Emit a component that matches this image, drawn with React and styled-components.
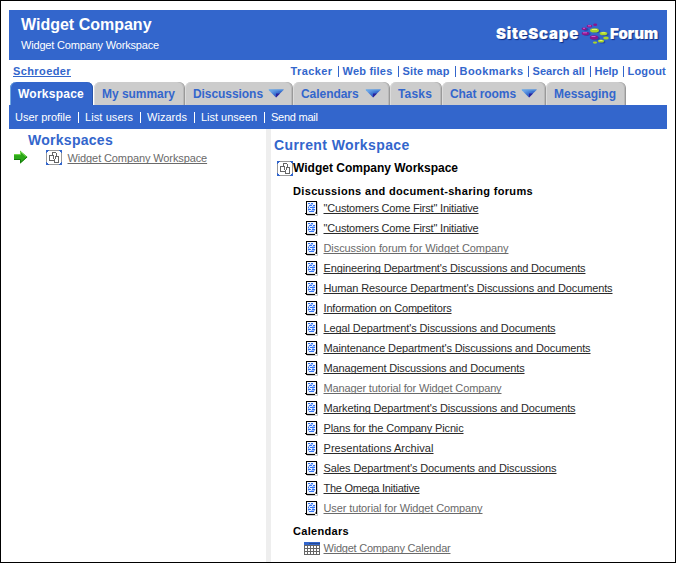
import React from 'react';
import styled, { createGlobalStyle } from 'styled-components';

const BLUE = '#3366cc';

const GlobalStyle = createGlobalStyle`
  *, *::before, *::after { box-sizing: border-box; }
  body { margin: 0; background: #fff; font: 11px "Liberation Sans", Arial, sans-serif; }
  svg { display: block; flex: none; }
`;

const Page = styled.div`
  width: 676px;
  height: 563px;
  border: 1px solid #000;
  padding: 9px 8px 0;
  background: #fff;
  overflow: hidden;
  display: flex;
  flex-direction: column;
  white-space: nowrap;
`;

const Header = styled.header`
  flex: none;
  height: 50px;
  background: ${BLUE};
  color: #fff;
  display: flex;
  justify-content: space-between;
  padding: 0 8px 0 12px;
`;

const Title = styled.h1`
  margin: 0;
  padding-top: 5px;
  font-size: 16px;
  line-height: 20px;
`;

const Subtitle = styled.div`
  margin-top: 3px;
  line-height: 14px;
  letter-spacing: -0.177px;
`;

const Brand = styled.div`
  height: 50px;
  display: flex;
  align-items: center;
  font: 900 15px/48px Inter, "Liberation Sans", sans-serif;
  text-shadow: 1px 1px 1px #0b2a80;
  -webkit-text-stroke: 0.15px #fff;
  padding-bottom: 2px;
`;

const BrandWord = styled.span`
  width: ${(p) => p.$w}px;
  padding-left: ${(p) => p.$pad || 0}px;
  letter-spacing: ${(p) => p.$ls}px;
`;

const UserBar = styled.div`
  flex: none;
  height: 22px;
  padding: 0 0 0 4px;
  display: flex;
  justify-content: space-between;
  font-weight: bold;
  line-height: 22px;
  color: ${BLUE};
`;

const UserLink = styled.a`
  letter-spacing: 0.398px;
  text-decoration: underline;
  text-underline-offset: 1px;
  text-decoration-thickness: 1px;
`;

const Tools = styled.nav`
  display: flex;
`;

const Tool = styled.a`
  width: ${(p) => p.$w}px;
  letter-spacing: ${(p) => p.$ls}px;
  display: flex;
  justify-content: space-between;
  &:not(:last-child)::after {
    content: '';
    width: 1px;
    height: 11px;
    margin: 6px 4px 0 0;
    background: ${BLUE};
  }
`;

const Tabs = styled.nav`
  flex: none;
  height: 23px;
  padding-left: 1px;
  display: flex;
  gap: 1px;
`;

const Tab = styled.a`
  width: ${(p) => p.$w}px;
  height: 23px;
  padding: 0 8px;
  display: flex;
  justify-content: space-between;
  align-items: center;
  border-radius: 6px 6px 0 0;
  font-size: 12px;
  font-weight: bold;
  line-height: 24px;
  letter-spacing: ${(p) => p.$ls}px;
  color: ${(p) => (p.$active ? '#fff' : BLUE)};
  background: ${(p) => (p.$active ? BLUE : '#ccc')};
  box-shadow: ${(p) =>
    p.$active
      ? 'inset 1px 0 0 #70a7e0, inset -1px 0 0 #2754aa'
      : 'inset 1px 0 0 #dcdcdc, inset -1px 0 0 #b8b8b8, 1px 0 0 #999'};
`;

const SubNav = styled.nav`
  flex: none;
  height: 24px;
  background: ${BLUE};
  color: #fff;
  display: flex;
  padding-left: 6px;
  line-height: 25px;
`;

const SubItem = styled.a`
  width: ${(p) => p.$w}px;
  letter-spacing: ${(p) => p.$ls}px;
  display: flex;
  justify-content: space-between;
  &:not(:last-child)::after {
    content: '';
    width: 1px;
    height: 11px;
    margin: 7px 6px 0 0;
    background: #fff;
  }
`;

const Body = styled.main`
  flex: 1;
  display: flex;
`;

const SidePane = styled.section`
  width: 257px;
  padding-top: 2px;
`;

const Divider = styled.div`
  width: 5px;
  background: #eee;
`;

const MainPane = styled.section`
  padding: 7px 0 0 3px;
`;

const PaneTitle = styled.h2`
  margin: 0 0 0 ${(p) => p.$indent || 0}px;
  font-size: 14px;
  line-height: 18px;
  color: ${BLUE};
  letter-spacing: ${(p) => p.$ls}px;
`;

const TreeRow = styled.div`
  height: 17px;
  padding-left: 5px;
  display: flex;
  align-items: center;
  & > svg:first-child { margin-right: 18px; }
  & > a { margin-left: 5.5px; }
`;

const CurrentRow = styled.div`
  height: 18px;
  margin-top: 5px;
  padding-left: 3px;
  display: flex;
  align-items: flex-start;
  font-size: 12px;
  font-weight: bold;
  line-height: 18px;
  & > svg { margin-top: 2px; }
`;

const GroupTitle = styled.h3`
  margin: ${(p) => p.$top}px 0 0 19px;
  font-size: 11px;
  line-height: 14px;
  letter-spacing: ${(p) => p.$ls}px;
`;

const EntryRow = styled.div`
  height: 20px;
  padding-left: ${(p) => p.$indent}px;
  display: flex;
  align-items: center;
  gap: ${(p) => p.$gap}px;
`;

const EntryLink = styled.a`
  line-height: 20px;
  color: ${(p) => (p.$visited ? '#6a6a6a' : '#2a2a2a')};
  letter-spacing: ${(p) => p.$ls}px;
  text-decoration: underline;
  text-decoration-thickness: 1px;
  text-underline-offset: 1px;
  text-decoration-skip-ink: none;
`;

const Orbs = () => (
  <svg width="29" height="22" viewBox="0 0 29 22">
    <g fill="#0f3090" opacity=".5">
      <ellipse cx="6" cy="6.5" rx="2.6" ry="1.4" /><ellipse cx="16" cy="8.1" rx="4.4" ry="2" />
      <ellipse cx="7" cy="11.1" rx="3.6" ry="1.8" /><ellipse cx="25" cy="11.2" rx="3.6" ry="1.8" />
      <ellipse cx="15.6" cy="15.2" rx="4.2" ry="2" /><ellipse cx="22.4" cy="19" rx="3" ry="1.6" />
    </g>
    <g fill="#8a168c">
      <ellipse cx="4.2" cy="5.8" rx="2.7" ry="1.4" /><ellipse cx="9.5" cy="3.2" rx="2.8" ry="1.4" />
      <ellipse cx="15.2" cy="1.7" rx="2" ry="1.3" /><ellipse cx="5.5" cy="10.6" rx="3.8" ry="1.8" />
      <ellipse cx="14" cy="14.4" rx="4.2" ry="2.2" />
    </g>
    <g fill="#a9d42a">
      <ellipse cx="14.5" cy="7.4" rx="4.4" ry="2.1" /><ellipse cx="23.5" cy="10.5" rx="3.9" ry="1.8" />
      <ellipse cx="26" cy="15" rx="2.8" ry="1.5" /><ellipse cx="21" cy="18" rx="3" ry="1.5" />
      <ellipse cx="15" cy="19.6" rx="2.2" ry="1.1" />
    </g>
    <g fill="#d35bd0">
      <rect x="3" y="4.8" width="2" height="1" /><rect x="8" y="2.3" width="3" height="1" />
      <rect x="3" y="9.3" width="4" height="1" /><rect x="11.5" y="13" width="4" height="1" />
    </g>
    <g fill="#e3f76c">
      <rect x="12" y="6" width="5" height="1" /><rect x="21.5" y="9.3" width="4" height="1" />
      <rect x="19.5" y="17" width="3" height="1" />
    </g>
  </svg>
);

const Chevron = () => (
  <svg width="16" height="9" viewBox="0 0 16 9">
    <defs>
      <linearGradient id="chev" x1="0" y1="0" x2="1" y2="1">
        <stop offset="0" stopColor="#8fc5f5" />
        <stop offset=".5" stopColor="#3a73d2" />
        <stop offset="1" stopColor="#2d1c94" />
      </linearGradient>
    </defs>
    <path d="M0 .5H16L8 8.5Z" fill="url(#chev)" />
    <path d="M8 4.5 12 4.5 8 8.5Z" fill="#2b229b" />
    <path d="M1 1H15" stroke="#5d9ce0" />
  </svg>
);

const Arrow = () => (
  <svg width="14" height="15" viewBox="0 0 14 15">
    <path d="M0 4H6V.5L13.5 7 6 13.8V10H0Z" fill="#2ca818" />
    <path d="M0 4.6H6.5V1.7L12 6.5" fill="none" stroke="#74d84e" />
    <path d="M0 9.5H6.5V12.7L13 7" fill="none" stroke="#157a0c" />
  </svg>
);

const WorkspaceIcon = () => (
  <svg width="16" height="15" viewBox="0 0 16 15" shapeRendering="crispEdges">
    <path d="M0 0H16V15H0Z" fill="#999" />
    <path d="M1 1H15V14H1Z" fill="#fff" />
    <path d="M0 0H3V1H2V2H1V3H0ZM16 0H13V1H14V2H15V3H16ZM0 15H3V14H2V13H1V12H0ZM16 15H13V14H14V13H15V12H16Z" fill={BLUE} />
    <path fill="#666" fillRule="evenodd" d="M6 2H10V3H11V6H13V13H8V11H3V5H6ZM7 3V5H8V9H9V6H10V3ZM4 6V10H8V9H7V6ZM9 9V12H12V7H10V9Z" />
  </svg>
);

const DocIcon = () => (
  <svg width="13" height="16" viewBox="0 0 13 16" shapeRendering="crispEdges">
    <path d="M12 2H13V16H2V15H12Z" fill="#ccc" />
    <path d="M2 2H11V13H2Z" fill="#f2f6ff" />
    <path d="M1 1H12V14H11V2H2V13H1Z" fill="#000" />
    <path d="M0 13H2V14H10V15H1V14H0Z" fill="#000" />
    <path d="M2 13H10V14H2Z" fill="#ddd" />
    <path d="M10 12H11V14H10Z" fill="#888" />
    <path
      fill="#2f74f5"
      d="M3 3H5V4H3ZM6 3H8V4H6ZM4 5H7V6H4ZM8 5H10V6H8ZM3 7H4V8H3ZM5 7H10V8H5ZM3 9H6V10H3ZM7 9H10V10H7ZM4 11H9V12H4Z"
    />
    <path fill="#a4c2fc" d="M3 6H5V7H3ZM7 6H10V7H7ZM3 8H5V9H3ZM7 8H9V9H7ZM3 10H4V11H3ZM6 10H10V11H6ZM5 4H8V5H5Z" />
  </svg>
);

const CalendarIcon = () => (
  <svg width="16" height="13" viewBox="0 0 16 13" shapeRendering="crispEdges">
    <rect width="16" height="13" fill="#666" />
    <rect width="16" height="3" fill={BLUE} />
    <rect width="11" height="1" x="5" y="1" fill="#234a96" />
    <g fill="#fff">
      {[4, 7, 10].map((y) => [1, 4, 7, 10, 13].map((x) => <rect key={`${x}-${y}`} x={x} y={y} width="2" height="2" />))}
    </g>
  </svg>
);

const tools = [
  ['Tracker', 52, 0.406], ['Web files', 60, 0.212], ['Site map', 57, 0.143], ['Bookmarks', 73, 0.453],
  ['Search all', 62, 0.05], ['Help', 33, 0], ['Logout', 39.5, 0.2],
];

const tabs = [
  ['Workspace', 83, 0.243, false], ['My summary', 90, -0.037, false], ['Discussions', 107, -0.064, true],
  ['Calendars', 96, -0.05, true], ['Tasks', 51, 0.172, false], ['Chat rooms', 103, -0.069, true],
  ['Messaging', 79, 0, false],
];

const subItems = [
  ['User profile', 70, -0.021], ['List users', 62, 0.092], ['Wizards', 54, 0.038],
  ['List unseen', 70, -0.024], ['Send mail', 50, -0.25],
];

const forums = [
  ['"Customers Come First" Initiative', -0.189],
  ['"Customers Come First" Initiative', -0.189],
  ['Discussion forum for Widget Company', -0.077, true],
  ["Engineering Department's Discussions and Documents", -0.134],
  ["Human Resource Department's Discussions and Documents", -0.124],
  ['Information on Competitors', -0.18],
  ["Legal Department's Discussions and Documents", -0.111],
  ["Maintenance Department's Discussions and Documents", -0.119],
  ['Management Discussions and Documents', -0.14],
  ['Manager tutorial for Widget Company', -0.138, true],
  ["Marketing Department's Discussions and Documents", -0.131],
  ['Plans for the Company Picnic', -0.153],
  ['Presentations Archival', 0.053],
  ["Sales Department's Documents and Discussions", -0.102],
  ['The Omega Initiative', -0.275],
  ['User tutorial for Widget Company', -0.113, true],
];

export default function App() {
  return (
    <>
      <GlobalStyle />
      <Page>
        <Header>
          <div>
            <Title>Widget Company</Title>
            <Subtitle>Widget Company Workspace</Subtitle>
          </div>
          <Brand>
            <BrandWord $w={84} $ls={0.75}>SiteScape</BrandWord>
            <Orbs />
            <BrandWord $w={50} $pad={1} $ls={0}>Forum</BrandWord>
          </Brand>
        </Header>
        <UserBar>
          <UserLink>Schroeder</UserLink>
          <Tools>
            {tools.map(([t, w, ls]) => <Tool key={t} $w={w} $ls={ls}>{t}</Tool>)}
          </Tools>
        </UserBar>
        <Tabs>
          {tabs.map(([t, w, ls, menu], i) => (
            <Tab key={t} $w={w} $ls={ls} $active={i === 0}>
              {t}
              {menu && <Chevron />}
            </Tab>
          ))}
        </Tabs>
        <SubNav>
          {subItems.map(([t, w, ls]) => <SubItem key={t} $w={w} $ls={ls}>{t}</SubItem>)}
        </SubNav>
        <Body>
          <SidePane>
            <PaneTitle $indent={19} $ls={0.277}>Workspaces</PaneTitle>
            <TreeRow>
              <Arrow />
              <WorkspaceIcon />
              <EntryLink $visited $ls={-0.11}>Widget Company Workspace</EntryLink>
            </TreeRow>
          </SidePane>
          <Divider />
          <MainPane>
            <PaneTitle $ls={0.4}>Current Workspace</PaneTitle>
            <CurrentRow>
              <WorkspaceIcon />
              Widget Company Workspace
            </CurrentRow>
            <GroupTitle $top={7} $ls={0.339}>Discussions and document-sharing forums</GroupTitle>
            {forums.map(([t, ls, visited], i) => (
              <EntryRow key={i} $indent={31} $gap={5.5}>
                <DocIcon />
                <EntryLink $visited={visited} $ls={ls}>{t}</EntryLink>
              </EntryRow>
            ))}
            <GroupTitle $top={6} $ls={0.3}>Calendars</GroupTitle>
            <EntryRow $indent={30} $gap={3.5}>
              <CalendarIcon />
              <EntryLink $visited $ls={-0.221}>Widget Company Calendar</EntryLink>
            </EntryRow>
          </MainPane>
        </Body>
      </Page>
    </>
  );
}
